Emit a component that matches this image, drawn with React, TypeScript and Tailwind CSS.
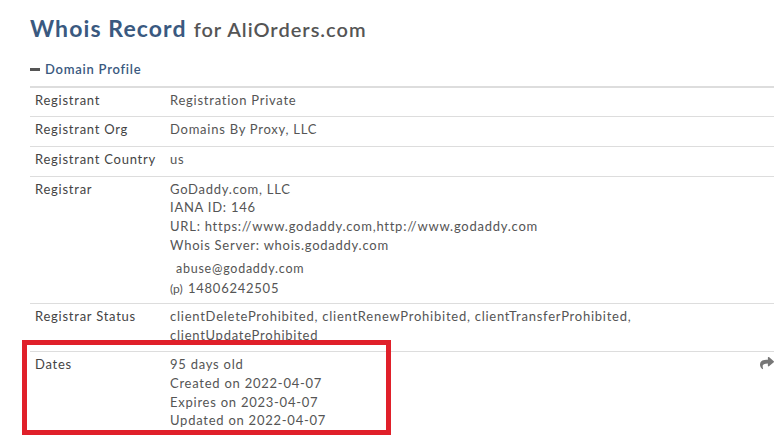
import React from 'react';
import { FaShare } from 'react-icons/fa';

function Row({ label, children, first = false, right }: { label: string; children: React.ReactNode; first?: boolean; right?: React.ReactNode }) {
    return (
        <div className={'flex flex-row pt-[3px] pb-[7px] leading-[18.7px]' + (first ? '' : ' border-t border-[#dddddd]')}>
            <div className="w-[140px] shrink-0 pl-[5px] text-[#444444]">{label}</div>
            <div className="flex-1 text-[#555555]">{children}</div>
            {right}
        </div>
    )
}

export default function App() {
    return (
        <div className="relative h-[435px] w-[774px] overflow-hidden bg-white pl-[30px] font-['Lato',sans-serif] text-[13px] tracking-[0.75px]">
            <h1 className="pt-[13px] leading-[30px]">
                <span className="text-[23px] font-bold tracking-[1.1px] text-[#3a5980]">Whois Record</span>
                <span className="ml-[7px] text-[20px] font-semibold tracking-[1px] text-[#555555]">for AliOrders.com</span>
            </h1>
            <div className="mt-[13px] flex flex-row items-center text-[13px] font-semibold text-[#3a5980]">
                <span className="mr-[5px] inline-block h-[3px] w-[10px] bg-[#555555]"></span>
                <span>Domain Profile</span>
            </div>
            <div className="mt-[6px] border-t-2 border-[#dddddd]">
                <Row label="Registrant" first>Registration Private</Row>
                <Row label="Registrant Org">Domains By Proxy, LLC</Row>
                <Row label="Registrant Country">us</Row>
                <Row label="Registrar">
                    <div>GoDaddy.com, LLC</div>
                    <div>IANA ID: 146</div>
                    <div>URL: https://www.godaddy.com,http://www.godaddy.com</div>
                    <div>Whois Server: whois.godaddy.com</div>
                    <div className="mt-[6px] pl-[6px] text-[12.5px]">abuse@godaddy.com</div>
                    <div className="-mb-[3px]">
                        <span className="inline-block w-[18px] text-[12px] tracking-normal">(p)</span>
                        <span>14806242505</span>
                    </div>
                </Row>
                <Row label="Registrar Status">
                    <div className="pr-[110px]">clientDeleteProhibited, clientRenewProhibited, clientTransferProhibited, clientUpdateProhibited</div>
                </Row>
                <Row
                    label="Dates"
                    right={
                        <div className="w-[14px] shrink-0 pt-[1px] text-[#777777]">
                            <FaShare size={14} />
                        </div>
                    }
                >
                    <div>95 days old</div>
                    <div>Created on 2022-04-07</div>
                    <div>Expires on 2023-04-07</div>
                    <div>Updated on 2022-04-07</div>
                </Row>
            </div>
            {/* highlight box over the Dates row */}
            <div className="absolute left-[22px] top-[340px] h-[95px] w-[369px] border-[5px] border-[#e0202a]"></div>
        </div>
    )
}
